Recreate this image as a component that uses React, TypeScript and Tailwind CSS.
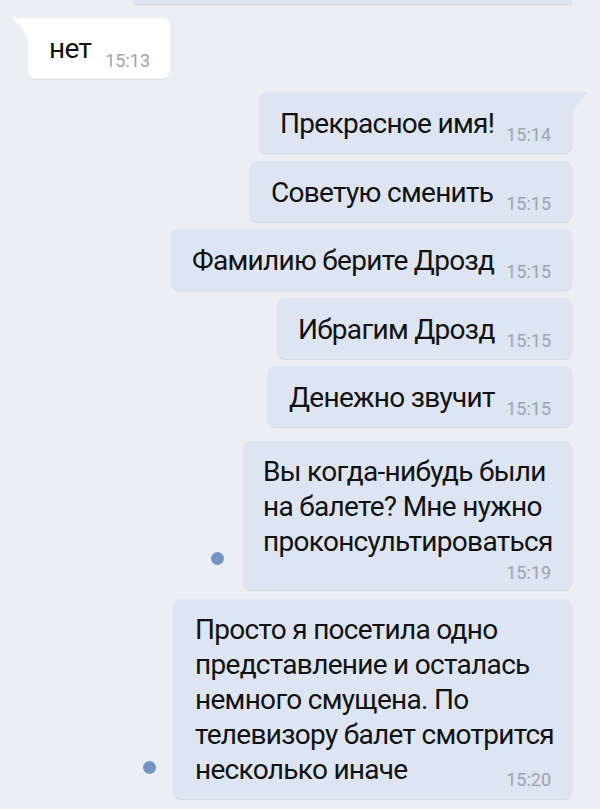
import React from 'react';

const OUT_LINES = [
  { text: "Прекрасное имя!", time: "15:14", w: "w-[313px]", mt: "mt-[13px]", tail: true },
  { text: "Советую сменить", time: "15:15", w: "w-[322px]", mt: "mt-[8px]", tail: false },
  { text: "Фамилию берите Дрозд", time: "15:15", w: "w-[401px]", mt: "mt-[7px]", tail: false },
  { text: "Ибрагим Дрозд", time: "15:15", w: "w-[295px]", mt: "mt-[8px]", tail: false },
  { text: "Денежно звучит", time: "15:15", w: "w-[304px]", mt: "mt-[7px]", tail: false },
];

const outBubble = "relative rounded-[8px] bg-[#dce5f1] shadow-[0_1px_1px_rgba(70,100,140,0.16)]";
const msgText = "text-[28px] leading-[35px] tracking-[-0.7px]";

function Time({ t, className = "" }: { t: string; className?: string }) {
  return <span className={"text-[18px] leading-[20px] text-[#9ca4ae] whitespace-nowrap " + className}>{t}</span>;
}

function Dot() {
  return <div className="w-[13px] h-[13px] rounded-full bg-[#7394c3] shrink-0 mb-[25px]" />;
}

export default function App() {
  return (
    <div className="min-h-screen bg-[#ebeef3] px-[28px] pb-[12px] text-[#111] overflow-hidden" style={{ fontFamily: "Roboto, 'Noto Sans', sans-serif" }}>
      {/* tail end of the previous message */}
      <div className="flex justify-end">
        <div className="w-[439px] h-[4px] rounded-b-[8px] bg-[#dce5f1] shadow-[0_1px_1px_rgba(70,100,140,0.16)]" />
      </div>

      {/* incoming */}
      <div className="flex justify-start mt-[14px]">
        <div className="relative flex items-end w-[142px] pl-[21px] pr-[20px] pt-[13px] pb-[8px] rounded-[8px] rounded-tl-none bg-white shadow-[0_1px_1px_rgba(0,0,0,0.08)]">
          <svg className="absolute right-full top-0" width="16" height="22" viewBox="0 0 16 22">
            <path d="M16 0H0C6 5 12 12 16 22Z" fill="#ffffff" />
          </svg>
          <span className={msgText + " mb-[5px]"}>нет</span>
          <Time t="15:13" className="ml-auto" />
        </div>
      </div>

      {OUT_LINES.map((m, i) => (
        <div key={i} className={"flex justify-end " + m.mt}>
          <div className={outBubble + " flex items-end pl-[21px] pr-[21px] pt-[14px] pb-[8px] " + m.w + (m.tail ? " rounded-tr-none" : "")}>
            {m.tail && (
              <svg className="absolute left-full top-0" width="16" height="23" viewBox="0 0 16 23">
                <path d="M0 0H16C10 5 4 13 0 23Z" fill="#dce5f1" />
              </svg>
            )}
            <span className={msgText + " mb-[4px] whitespace-nowrap"}>{m.text}</span>
            <Time t={m.time} className="ml-auto" />
          </div>
        </div>
      ))}

      <div className="flex justify-end items-end gap-[19px] mt-[14px]">
        <Dot />
        <div className={outBubble + " w-[329px] pl-[20px] pr-[20px] pt-[13px] pb-[7px]"}>
          <p className={msgText}>Вы когда-нибудь были на балете? Мне нужно проконсультироваться</p>
          <div className="flex justify-end mt-[4px] pr-[1px]">
            <Time t="15:19" />
          </div>
        </div>
      </div>

      <div className="flex justify-end items-end gap-[17px] mt-[9px]">
        <Dot />
        <div className={outBubble + " w-[399px] pl-[22px] pr-[14px] pt-[13px] pb-[12px]"}>
          <p className={msgText}>Просто я посетила одно представление и осталась немного смущена. По телевизору балет смотрится несколько иначе</p>
          <Time t="15:20" className="absolute right-[21px] bottom-[9px]" />
        </div>
      </div>
    </div>
  );
}
